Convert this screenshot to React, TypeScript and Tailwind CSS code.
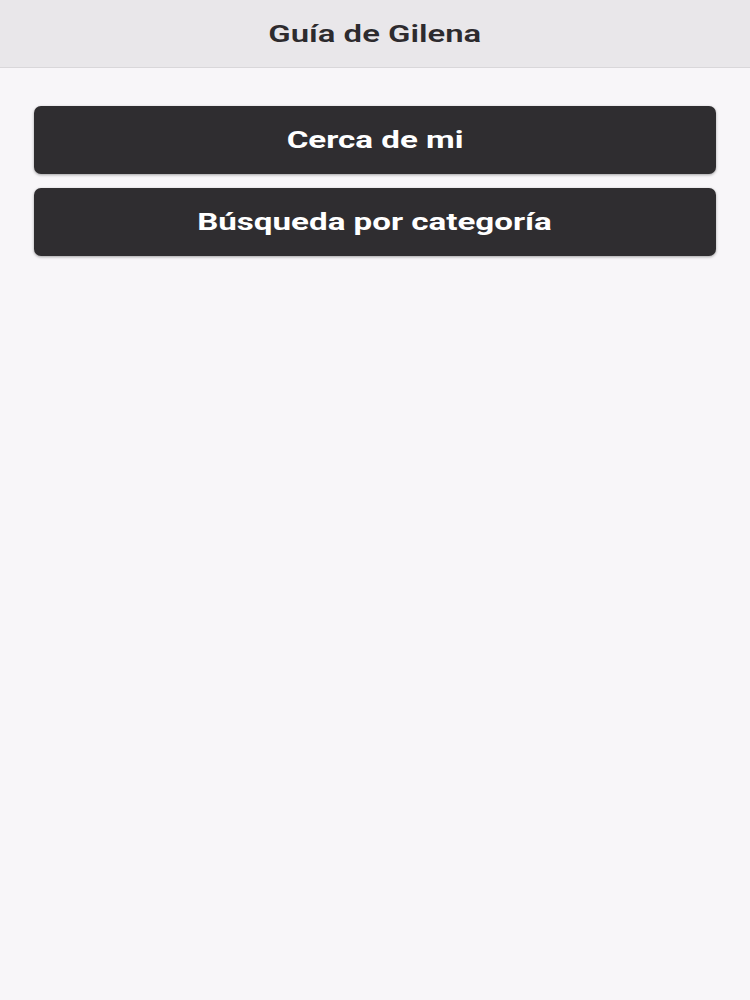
export default function App() {
  const items = ["Cerca de mi", "Búsqueda por categoría"];
  return (
    <div
      className="flex min-h-[1000px] flex-col bg-[#f8f6f9]"
      style={{ fontFamily: "Roboto, 'Liberation Sans', sans-serif" }}
    >
      <header className="flex h-[68px] items-center justify-center border-b border-[#d9d7da] bg-[#e9e7ea]">
        <h1 className="inline-block scale-x-[1.37] text-[24px] font-semibold text-[#2d2b2e]">
          Guía de Gilena
        </h1>
      </header>
      <main className="flex flex-col gap-[14px] px-[34px] pt-[38px]">
        {items.map((label) => (
          <button
            key={label}
            className="flex h-[68px] items-center justify-center rounded-[7px] bg-[#2f2d30] text-white shadow-[0_1px_3px_rgba(0,0,0,0.35)]"
          >
            <span className="inline-block scale-x-[1.38] text-[24px] font-bold">{label}</span>
          </button>
        ))}
      </main>
    </div>
  );
}
